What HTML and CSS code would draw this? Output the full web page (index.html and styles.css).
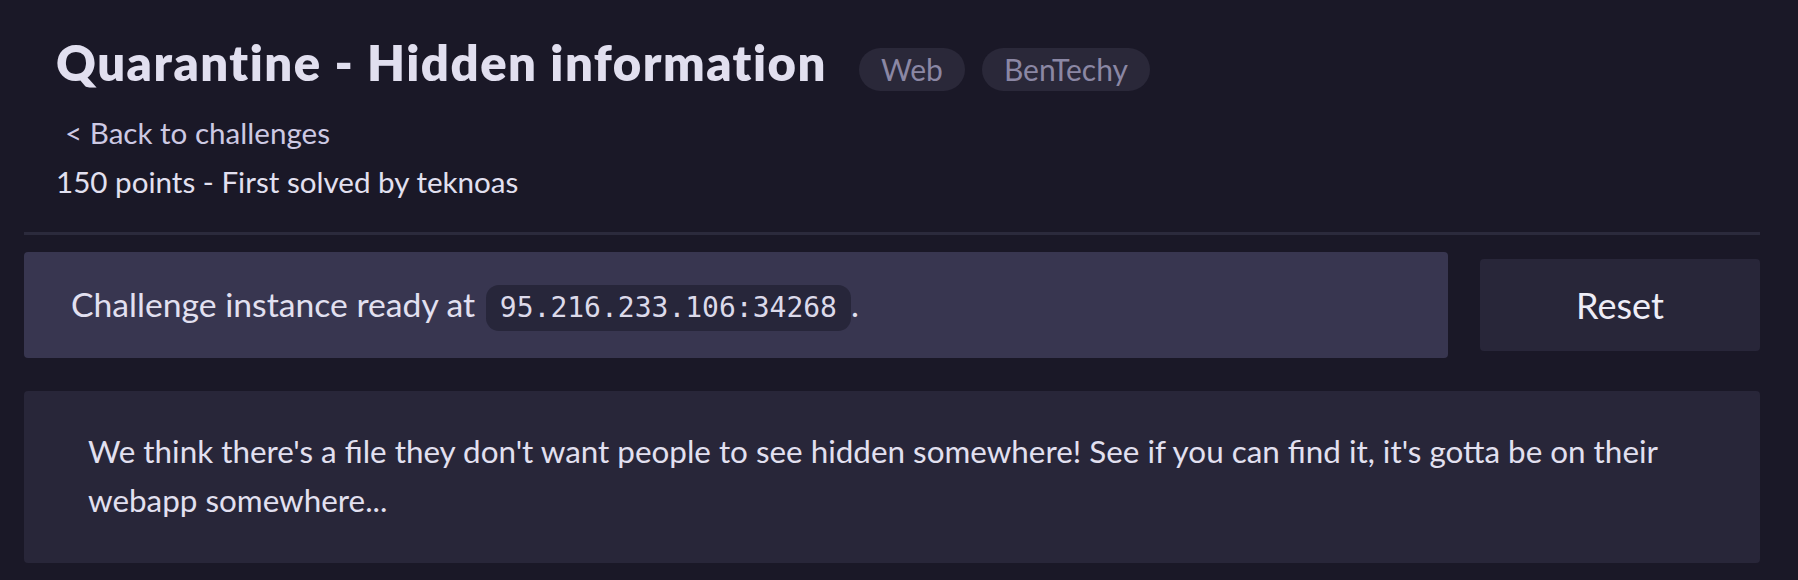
FILE: index.html
```html
<!DOCTYPE html>
<html lang="en">
<head>
<meta charset="utf-8">
<title>Quarantine - Hidden information</title>
<link rel="stylesheet" href="styles.css">
</head>
<body>
<main class="page">
  <header class="head">
    <div class="title-row">
      <h1 class="title">Quarantine - Hidden information</h1>
      <span class="tag">Web</span>
      <span class="tag">BenTechy</span>
    </div>
    <a class="back" href="#">&lt; Back to challenges</a>
    <p class="points">150 points - First solved by teknoas</p>
  </header>
  <hr class="sep">
  <section class="instance-row">
    <div class="instance">
      <p>Challenge instance ready at <code class="addr">95.216.233.106:34268</code>.</p>
    </div>
    <button class="reset" type="button">Reset</button>
  </section>
  <section class="desc">
    <p>We think there's a file they don't want people to see hidden somewhere! See if you can find it, it's gotta be on their webapp somewhere...</p>
  </section>
</main>
</body>
</html>
```

FILE: styles.css
```css
html, body {
  margin: 0;
  padding: 0;
  background: #1a1827;
}

body {
  font-family: "Lato", "Liberation Sans", sans-serif;
  color: #e0deee;
}

.page {
  padding: 0 38px 0 24px;
}

.head {
  padding: 33px 0 0 32px;
}

.title-row {
  display: flex;
  align-items: baseline;
  gap: 17px;
}

.title {
  margin: 0 15px 0 0;
  font-size: 49px;
  font-weight: 800;
  line-height: 1.2;
  letter-spacing: 1.5px;
  font-variant-ligatures: none;
  color: #e1dfef;
}

.tag {
  display: inline-block;
  padding: 5px 22px;
  border-radius: 22px;
  background: #2a2839;
  color: #8b87a4;
  font-size: 30px;
  line-height: 33px;
}

.back {
  display: block;
  margin-top: 23px;
  padding-left: 9px;
  font-size: 29.6px;
  color: #cdc9e3;
  text-decoration: none;
}

.points {
  margin: 14px 0 0 0;
  font-size: 29.6px;
  color: #e2e0f0;
}

.sep {
  margin: 33px 0 0 0;
  border: 0;
  height: 3px;
  background: #2b2a3c;
}

.instance-row {
  display: flex;
  align-items: center;
  gap: 32px;
  margin-top: 17px;
}

.instance {
  flex: 1;
  background: #383650;
  border-radius: 4px;
  padding: 32px 47px 27px;
}

.instance p {
  margin: 0;
  font-size: 33.7px;
  color: #e2e0f0;
}

.addr {
  display: inline-block;
  margin-left: 2px;
  padding: 6px 14px 7px;
  border-radius: 13px;
  background: #27263a;
  font-family: "DejaVu Sans Mono", "Liberation Mono", monospace;
  font-size: 28px;
  color: #dcdaea;
}

.reset {
  width: 280px;
  height: 92px;
  border: 0;
  border-radius: 4px;
  background: #282639;
  color: #eeedf7;
  font-family: "Lato", "Liberation Sans", sans-serif;
  font-size: 36px;
  cursor: pointer;
}

.desc {
  margin-top: 33px;
  background: #282639;
  border-radius: 4px;
  padding: 36px 64px 38px;
}

.desc p {
  margin: 0;
  font-size: 31.4px;
  line-height: 49px;
  color: #e2e0f0;
}
```
